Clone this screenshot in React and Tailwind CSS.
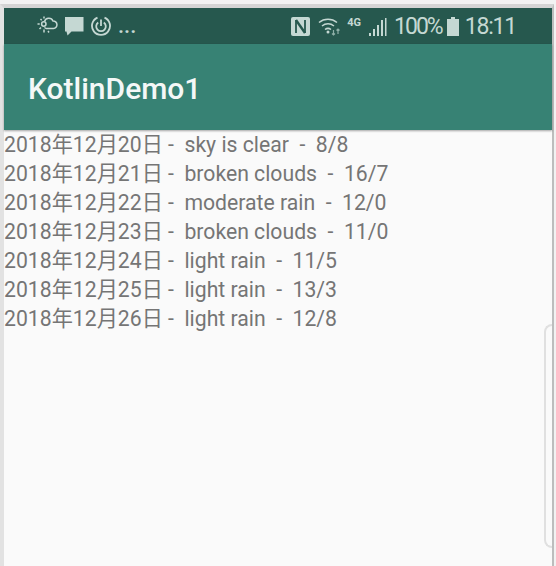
const rows = [
  '2018年12月20日 -  sky is clear  -  8/8',
  '2018年12月21日 -  broken clouds  -  16/7',
  '2018年12月22日 -  moderate rain  -  12/0',
  '2018年12月23日 -  broken clouds  -  11/0',
  '2018年12月24日 -  light rain  -  11/5',
  '2018年12月25日 -  light rain  -  13/3',
  '2018年12月26日 -  light rain  -  12/8',
];

const WeatherIcon = () => (
  <svg width="21" height="20" viewBox="0 0 21 20" fill="none" stroke="#c5d8d3" strokeWidth="1.500">
    <path d="M7.500 5.500a4.500 4.500 0 0 1 8.500-.5a3.700 3.700 0 0 1 .5 7.400H9a3 3 0 0 1-1.500-1" />
    <path d="M3.500 3l1.200 1.200M0.500 8h2.200M2.500 13l1.500-1.500M7 13.500v3M7 .5v2M11 15l1 1.500" />
    <circle cx="6.800" cy="8" r="2.200" />
  </svg>
);

const ChatIcon = () => (
  <svg width="19" height="20" viewBox="0 0 19 20" fill="#c5d8d3">
    <path d="M0 1h18.500v14.500H6.500L2.500 19.500 1.500 15.500H0z" />
  </svg>
);

const PowerIcon = () => (
  <svg width="20" height="20" viewBox="0 0 20 20" fill="none" stroke="#c5d8d3" strokeWidth="1.800">
    <path d="M13.500 1.600a9 9 0 1 1-7 0" />
    <path d="M7.200 6.500a4.800 4.800 0 1 0 5.600 0" />
    <path d="M10 3.500v6.500" />
  </svg>
);

const NfcIcon = () => (
  <svg width="19" height="19" viewBox="0 0 19 19">
    <rect width="19" height="19" rx="2" fill="#c5d8d3" />
    <path d="M5 3v13M14 3v13" fill="none" stroke="#26584e" strokeWidth="1.800" />
    <path d="M5 3l9 13" fill="none" stroke="#26584e" strokeWidth="2.400" />
  </svg>
);

const WifiIcon = () => (
  <svg width="23" height="19" viewBox="0 0 23 19" fill="none" stroke="#c5d8d3" strokeWidth="1.500">
    <path d="M1 5.500a14 14 0 0 1 18 0" />
    <path d="M4 9a9.500 9.500 0 0 1 12 0" />
    <path d="M7 12.500a5 5 0 0 1 6 0" />
    <circle cx="10" cy="15" r="1.500" fill="#c5d8d3" stroke="none" />
    <path d="M15.500 13v5M14 16.500l1.500 1.500l1.500-1.500M20 17v-5M18.500 13.500l1.500-1.500l1.500 1.500" strokeWidth="1.200" stroke="#8fb0a8" />
  </svg>
);

const SignalIcon = () => (
  <svg width="18" height="19" viewBox="0 0 18 19" fill="#c5d8d3">
    <rect x="0" y="16" width="2" height="3" />
    <rect x="4" y="12" width="2" height="7" />
    <rect x="8" y="8" width="2" height="11" />
    <rect x="12" y="3" width="2" height="16" />
    <rect x="16" y="1" width="1.500" height="18" />
  </svg>
);

const BatteryIcon = () => (
  <svg width="12" height="19" viewBox="0 0 12 19" fill="#c5d8d3">
    <path d="M4 0h4v2h4v17H0V2h4z" />
  </svg>
);

const App = () => {
  return (
    <div className="h-[566px] w-[556px] overflow-hidden bg-[#f2f2f2] pt-1 font-['Roboto',sans-serif]">
      <div className="mr-0.5 h-full border-t-[4px] border-r-2 border-l-4 border-t-[#d4d4d4] border-r-[#bdbdbd] border-l-[#e2e2e2]">
        {/* Status bar */}
        <div className="flex h-9 items-center justify-between bg-[#26584e] text-[#c5d8d3]">
          <div className="flex items-center gap-[7px] pl-[33px]">
            <WeatherIcon />
            <ChatIcon />
            <PowerIcon />
            <span className="text-[22px] font-medium leading-none">...</span>
          </div>
          <div className="flex items-center pr-[36px]">
            <NfcIcon />
            <span className="ml-2"><WifiIcon /></span>
            <span className="mb-2 ml-[6px] text-[11px] font-bold leading-none">4G</span>
            <span className="ml-2"><SignalIcon /></span>
            <span className="ml-[7px] text-[23px] leading-none tracking-[-2px]">100%</span>
            <span className="ml-[5px]"><BatteryIcon /></span>
            <span className="ml-[6px] text-[23px] leading-none tracking-[-1.2px]">18:11</span>
          </div>
        </div>
        {/* App bar */}
        <div className="relative z-10 flex h-[86px] items-center bg-[#378274] pl-[24px] pt-0.5 text-[30px] font-medium text-[#f4f8f7] shadow-[0_1px_2px_rgba(0,0,0,0.35)]">
          KotlinDemo1
        </div>
        <div className="relative h-[436px] bg-[#fafafa]">
          <ul className="text-[21.2px] leading-[29px] text-[#757575]">
            {rows.map((row) => (
              <li key={row} className="whitespace-pre font-['Roboto','Noto_Sans_CJK_SC',sans-serif]">{row}</li>
            ))}
          </ul>
          <div className="absolute right-0 top-[194px] h-[224px] w-2 rounded-l-lg border-2 border-r-0 border-[#e0e0e0]" />
        </div>
      </div>
    </div>
  );
};

export default App;
